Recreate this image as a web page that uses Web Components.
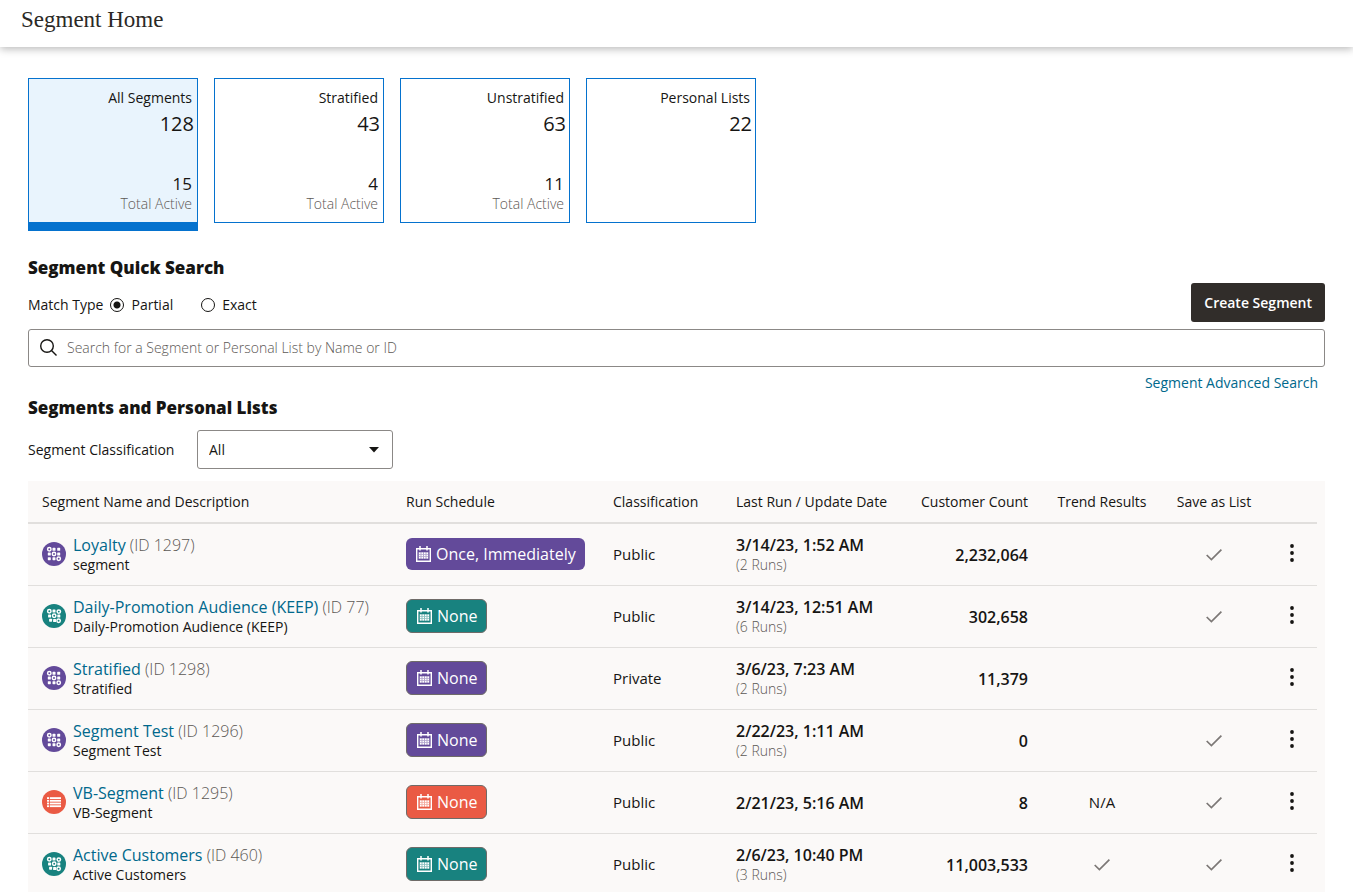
<!DOCTYPE html>
<html lang="en">
<head>
<meta charset="utf-8">
<meta name="viewport" content="width=device-width, initial-scale=1">
<title>Segment Home</title>
<style>
  :root {
    --ink: #161513;
    --muted: #6f6b68;
    --soft: #5c5855;
    --link: #00688c;
    --blue: #0572ce;
    --panel: #fbf9f8;
    --line: #e1dfdd;
    --field: #8b8886;
    --purple: #634a9a;
    --teal: #18827f;
    --coral: #ea5a44;
  }
  body {
    margin: 0;
    background: #fff;
    color: var(--ink);
    font: 14px/20px "Open Sans", "Noto Sans", sans-serif;
  }
</style>
</head>
<body>
<segment-home></segment-home>

<script>
const define = (name, html, setup) => {
  const template = document.createElement('template');
  template.innerHTML = html;
  customElements.define(name, class extends HTMLElement {
    constructor() {
      super();
      this.attachShadow({ mode: 'open' }).append(template.content.cloneNode(true));
    }
    connectedCallback() { if (setup) setup(this, this.shadowRoot); }
  });
};

define('app-bar', `
  <style>
    :host { display: block; box-sizing: border-box; height: 47px; padding: 6px 21px; background: #fff; box-shadow: 0 2px 8px rgba(0,0,0,.28); }
    h1 { margin: 0; font: 23px/28px "Liberation Serif", serif; color: #2b2926; }
  </style>
  <h1><slot></slot></h1>`);

define('section-title', `
  <style>
    :host { display: block; }
    h2 { margin: 0; font-size: 17px; line-height: 24px; font-weight: 800; }
  </style>
  <h2><slot></slot></h2>`);

define('count-tile', `
  <style>
    :host { display: block; width: 170px; }
    button { display: flex; flex-direction: column; align-items: flex-end; width: 100%; min-height: 145px; box-sizing: border-box; margin: 0; padding: 9px 5px 8px; border: 1px solid var(--blue); background: #fff; font: inherit; color: var(--ink); text-align: right; cursor: pointer; }
    :host([selected]) button { background: #e9f4fd; border-bottom-width: 9px; min-height: 153px; }
    .total { font-size: 20px; line-height: 32px; margin-right: -2px; }
    .active { font-size: 17px; line-height: 20px; margin-top: 34px; }
    .caption { color: var(--soft); font-weight: 300; }
  </style>
  <button type="button"><span><slot></slot></span><span class="total"></span></button>`,
  (el, root) => {
    const button = root.querySelector('button');
    root.querySelector('.total').textContent = el.getAttribute('total');
    button.setAttribute('aria-pressed', el.hasAttribute('selected'));
    if (el.hasAttribute('active'))
      button.insertAdjacentHTML('beforeend', `<span class="active">${el.getAttribute('active')}</span><span class="caption">Total Active</span>`);
  });

define('match-type', `
  <style>
    :host { display: block; }
    fieldset { display: flex; align-items: center; height: 34px; margin: 0; padding: 0; border: 0; }
    .name { font-weight: 500; margin-right: 7px; }
    label { display: flex; align-items: center; gap: 7px; margin-right: 28px; }
    input { appearance: none; box-sizing: border-box; width: 14px; height: 14px; margin: 0; border: 1px solid var(--ink); border-radius: 50%; background: #fff; }
    input:checked { background: radial-gradient(circle, var(--ink) 3px, #fff 4px); }
  </style>
  <fieldset aria-labelledby="name">
    <span class="name" id="name">Match Type</span>
    <label><input type="radio" name="match" checked>Partial</label>
    <label><input type="radio" name="match">Exact</label>
  </fieldset>`);

define('search-field', `
  <style>
    :host { display: block; }
    label { display: flex; align-items: center; box-sizing: border-box; height: 38px; padding: 0 10px; gap: 9px; border: 1px solid var(--field); border-radius: 3px; background: #fff; }
    svg { flex: none; width: 19px; height: 20px; }
    input { flex: 1; min-width: 0; padding: 0; border: 0; outline: 0; background: none; font: inherit; color: var(--ink); }
    input::placeholder { color: var(--soft); opacity: 1; font-weight: 300; }
  </style>
  <label>
    <svg viewBox="0 0 19 20" fill="none" stroke="#161513" stroke-width="1.4" aria-hidden="true"><circle cx="8" cy="8" r="6.3"/><path d="M12.5 12.5 17.5 17.5"/></svg>
    <input type="search" aria-label="Search segments" placeholder="Search for a Segment or Personal List by Name or ID">
  </label>`);

define('primary-button', `
  <style>
    :host { display: block; }
    button { height: 39px; padding: 0 13px; border: 0; border-radius: 3px; background: #312d2a; color: #fff; font: inherit; font-weight: 600; cursor: pointer; }
  </style>
  <button type="button"><slot></slot></button>`);

define('class-filter', `
  <style>
    :host { display: flex; align-items: center; gap: 20px; }
    label { font-weight: 500; width: 149px; white-space: nowrap; }
    .box { display: grid; align-items: center; width: 196px; }
    .box > * { grid-area: 1 / 1; }
    select { appearance: none; box-sizing: border-box; width: 100%; height: 39px; margin: 0; padding: 0 11px; border: 1px solid var(--field); border-radius: 3px; background: #fff; color: var(--ink); font: inherit; }
    svg { justify-self: end; width: 10px; height: 6px; margin-right: 14px; pointer-events: none; }
  </style>
  <label for="classification">Segment Classification</label>
  <span class="box">
    <select id="classification"><option>All</option><option>Public</option><option>Private</option></select>
    <svg viewBox="0 0 10 6" aria-hidden="true"><path d="M0 0h10L5 5.5z" fill="#161513"/></svg>
  </span>`);

const ring = (x, y) => `<circle cx="${x}" cy="${y}" r="1.7" fill="none" stroke="#fff" stroke-width="1.5"/>`;
const dot = (x, y) => `<rect x="${x - 1.5}" y="${y - 1.5}" width="3" height="3" rx=".6" fill="#fff"/>`;
const kinds = {
  stratified: { color: 'var(--purple)', art: ring(7.3, 7.3) + dot(12, 7.3) + dot(16.7, 7.3) + dot(7.3, 12) + ring(12, 12) + dot(16.7, 12) + dot(7.3, 16.7) + dot(12, 16.7) + ring(16.7, 16.7) },
  unstratified: { color: 'var(--teal)', art: ring(7.3, 7.3) + dot(12, 7) + ring(16.8, 7.6) + dot(7.6, 12) + ring(12.2, 11.8) + dot(16.8, 12) + dot(8.6, 16.2) + dot(12.6, 16.6) + ring(16.6, 16.8) }
  ,
  list: { color: 'var(--coral)', art: [8, 10.7, 13.4, 16.1].map(y => `<rect x="5" y="${y - .8}" width="2" height="1.8" fill="#fff"/><rect x="7.8" y="${y - .8}" width="11.2" height="1.8" fill="#fff"/>`).join('') }
};

define('segment-icon', `
  <style>
    :host { display: block; flex: none; width: 24px; height: 24px; }
    svg { display: block; width: 24px; height: 24px; }
  </style>
  <svg viewBox="0 0 24 24" aria-hidden="true"></svg>`,
  (el, root) => {
    const kind = kinds[el.getAttribute('kind')];
    root.querySelector('svg').innerHTML = `<circle cx="12" cy="12" r="12" style="fill:${kind.color}"/>${kind.art}`;
  });

define('schedule-badge', `
  <style>
    :host { display: inline-flex; align-items: center; gap: 4px; box-sizing: border-box; height: 34px; padding: 0 9px; border: 1px solid #6f6b68; border-radius: 6px; color: #fff; font-size: 16px; line-height: 20px; vertical-align: middle; white-space: nowrap; }
    :host([plain]) { height: 32px; border: 0; }
    :host([kind=stratified]) { background: var(--purple); }
    :host([kind=unstratified]) { background: var(--teal); }
    :host([kind=list]) { background: var(--coral); }
    svg { flex: none; width: 17px; height: 16px; }
  </style>
  <svg viewBox="0 0 17 16" fill="none" stroke="#fff" aria-hidden="true">
    <path d="M1.7 2.7h13.6v12.6H1.7z" stroke-width="1.4"/><path d="M5 0v4.5M12 0v4.5" stroke-width="1.5"/>
    <path d="M4 7.2h9M4 9.5h9M4 11.8h9" stroke-width="1.5" stroke-dasharray="1.5 1"/><path d="M3.5 6.2h10v6.5h-10z" fill="#fff" fill-opacity=".5" stroke="none"/>
  </svg>
  <slot></slot>`);

define('check-mark', `
  <style>:host { display: inline-block; vertical-align: middle; } svg { display: block; width: 16px; height: 12px; }</style>
  <svg viewBox="0 0 16 12" fill="none" stroke="#7c7876" stroke-width="1.7" role="img" aria-label="Yes"><path d="M.7 6 5.4 10.6 15.4.7"/></svg>`);

define('row-menu', `
  <style>
    :host { display: inline-block; vertical-align: middle; }
    button { display: block; padding: 4px; border: 0; background: none; cursor: pointer; }
    svg { display: block; width: 6px; height: 20px; }
  </style>
  <button type="button" aria-label="Row actions"><svg viewBox="0 0 6 20" fill="#161513"><circle cx="3" cy="3" r="1.9"/><circle cx="3" cy="10" r="1.9"/><circle cx="3" cy="17" r="1.9"/></svg></button>`);

const segments = [
  { kind: 'stratified', name: 'Loyalty', id: 1297, text: 'segment', run: 'Once, Immediately', cls: 'Public', date: '3/14/23, 1:52 AM', runs: 2, count: '2,232,064', trend: '', save: true },
  { kind: 'unstratified', name: 'Daily-Promotion Audience (KEEP)', id: 77, text: 'Daily-Promotion Audience (KEEP)', run: 'None', cls: 'Public', date: '3/14/23, 12:51 AM', runs: 6, count: '302,658', trend: '', save: true },
  { kind: 'stratified', name: 'Stratified', id: 1298, text: 'Stratified', run: 'None', cls: 'Private', date: '3/6/23, 7:23 AM', runs: 2, count: '11,379', trend: '', save: false },
  { kind: 'stratified', name: 'Segment Test', id: 1296, text: 'Segment Test', run: 'None', cls: 'Public', date: '2/22/23, 1:11 AM', runs: 2, count: '0', trend: '', save: true },
  { kind: 'list', name: 'VB-Segment', id: 1295, text: 'VB-Segment', run: 'None', cls: 'Public', date: '2/21/23, 5:16 AM', runs: 0, count: '8', trend: 'N/A', save: true },
  { kind: 'unstratified', name: 'Active Customers', id: 460, text: 'Active Customers', run: 'None', cls: 'Public', date: '2/6/23, 10:40 PM', runs: 3, count: '11,003,533', trend: '<check-mark></check-mark>', save: true }
];

define('segment-table', `
  <style>
    :host { display: block; padding-right: 8px; background: var(--panel); }
    table { width: 100%; table-layout: fixed; border-collapse: separate; border-spacing: 0; }
    .run { width: 207px; } .cls { width: 123px; } .date { width: 185px; } .count { width: 135px; } .trend { width: 120px; } .save { width: 104px; } .menu { width: 51px; }
    th { height: 41px; padding: 0 14px; border-bottom: 2px solid var(--line); font-weight: 500; text-align: left; white-space: nowrap; }
    td { box-sizing: border-box; height: 62px; padding: 0 14px; border-bottom: 1px solid var(--line); font-size: 15px; white-space: nowrap; }
    th.num, td.num { text-align: right; }
    td.num { font-size: 16px; }
    th.mid, td.mid { text-align: center; padding: 0; }
    td.up, td.mid.up { padding-bottom: 2px; }
    td.menu { padding-bottom: 4px; }
    .name { display: flex; align-items: flex-start; gap: 7px; }
    segment-icon { margin-top: 7px; }
    .title { font-size: 16px; }
    .title, .sub { display: block; }
    .sub { font-size: 14px; }
    .id, .runs { color: var(--soft); font-weight: 300; }
    a { color: var(--link); text-decoration: none; }
    .strong { font-weight: 600; }
  </style>
  <table>
    <colgroup><col><col class="run"><col class="cls"><col class="date"><col class="count"><col class="trend"><col class="save"><col class="menu"></colgroup>
    <thead><tr><th>Segment Name and Description</th><th>Run Schedule</th><th>Classification</th><th>Last Run / Update Date</th><th class="num">Customer Count</th><th class="mid">Trend Results</th><th class="mid">Save as List</th><th class="mid" aria-label="Actions"></th></tr></thead>
    <tbody></tbody>
  </table>`,
  (el, root) => {
    root.querySelector('tbody').innerHTML = segments.map(s => `<tr>
      <td><div class="name"><segment-icon kind="${s.kind}"></segment-icon><div><span class="title"><a href="#${s.id}">${s.name}</a> <span class="id">(ID ${s.id})</span></span><span class="sub">${s.text}</span></div></div></td>
      <td class="up"><schedule-badge kind="${s.kind}"${s.run === 'None' ? '' : ' plain'}>${s.run}</schedule-badge></td>
      <td class="up">${s.cls}</td>
      <td><span class="title strong">${s.date}</span>${s.runs ? `<span class="sub runs">(${s.runs} Runs)</span>` : ''}</td>
      <td class="num strong">${s.count}</td>
      <td class="mid up">${s.trend}</td>
      <td class="mid up">${s.save ? '<check-mark></check-mark>' : ''}</td>
      <td class="mid menu"><row-menu></row-menu></td></tr>`).join('');
  });

define('segment-home', `
  <style>
    :host { display: block; height: 100vh; overflow: hidden; }
    main { padding: 31px 28px; }
    .tiles { display: flex; align-items: flex-start; gap: 16px; margin-bottom: 25px; }
    .tools { display: flex; justify-content: space-between; align-items: flex-end; margin: 3px 0 7px; }
    .more { display: flex; justify-content: flex-end; margin: 6px 7px 3px; }
    a { color: var(--link); text-decoration: none; }
    class-filter { margin: 10px 0 12px; }
  </style>
  <app-bar>Segment Home</app-bar>
  <main>
    <div class="tiles">
      <count-tile total="128" active="15" selected>All Segments</count-tile>
      <count-tile total="43" active="4">Stratified</count-tile>
      <count-tile total="63" active="11">Unstratified</count-tile>
      <count-tile total="22">Personal Lists</count-tile>
    </div>
    <section-title>Segment Quick Search</section-title>
    <div class="tools"><match-type></match-type><primary-button>Create Segment</primary-button></div>
    <search-field></search-field>
    <div class="more"><a href="#advanced">Segment Advanced Search</a></div>
    <section-title>Segments and Personal Lists</section-title>
    <class-filter></class-filter>
    <segment-table></segment-table>
  </main>`);
</script>
</body>
</html>
